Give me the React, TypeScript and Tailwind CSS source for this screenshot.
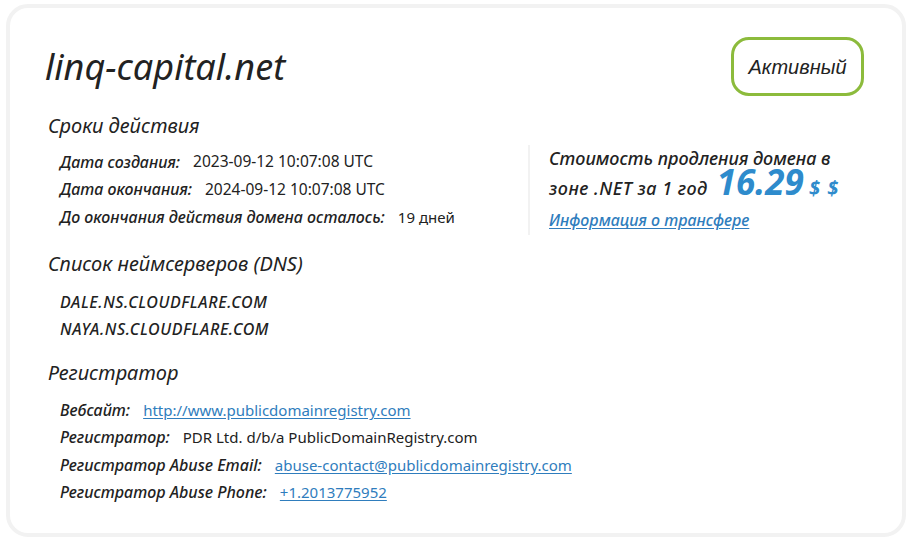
import React from "react";

const font = { fontFamily: '"Noto Sans", "Open Sans", sans-serif' };

function Row({ label, children }: { label: string; children: React.ReactNode }) {
  return (
    <div className="flex items-center h-[27.5px] text-[15px] text-[#222]">
      <span className="italic font-medium text-[16px] mr-[13px]">{label}</span>
      <span>{children}</span>
    </div>
  );
}

function Link({ children }: { children: React.ReactNode }) {
  return <a className="text-[#2f7dbd] underline underline-offset-2" href="#">{children}</a>;
}

export default function App() {
  return (
    <div className="bg-white w-[913px] h-[545px] pt-[4px] pl-[6px]" style={font}>
      <div className="w-[900px] h-[533px] border-4 border-[#f2f2f2] rounded-[22px] pt-[29px] pl-[35px] pr-[38px] text-[#222]">
        <div className="flex items-center justify-between h-[59px]">
          <div className="text-[36px] italic leading-[40px] text-[#222]">linq-capital.net</div>
          <div
            className="h-[59px] w-[133px] flex items-center justify-center border-[3px] border-[#8cbb3c] rounded-[18px] italic text-[20px] text-[#222]"
            style={{ fontFamily: '"Liberation Sans", Arial, sans-serif' }}
          >
            Активный
          </div>
        </div>
        <div className="pl-[3px]">
          <div className="mt-[16px] text-[20px] italic leading-[28px]">Сроки действия</div>
          <div className="flex mt-[8px] h-[83px]">
            <div className="w-[480px] pl-[12px]">
              <Row label="Дата создания:"><span className="text-[15.5px]">2023-09-12 10:07:08 UTC</span></Row>
              <Row label="Дата окончания:"><span className="text-[15.5px]">2024-09-12 10:07:08 UTC</span></Row>
              <Row label="До окончания действия домена осталось:">19 дней</Row>
            </div>
            <div className="w-[2px] bg-[#f2f2f2] -mt-[3px] h-[90px]" />
            <div className="pl-[19px] italic font-medium text-[18px] text-[#222]">
              <div className="leading-[30px] h-[30px] -mt-[5px]">Стоимость продления домена в</div>
              <div className="h-[30px] leading-[30px] whitespace-nowrap">
                <span className="tracking-[0.5px]">зоне .NET за 1 год</span>
                <span className="ml-[9px] text-[35px] font-bold text-[#2e8bcc] leading-[0px]">16.29</span>
                <span className="ml-[5px] text-[20px] font-bold text-[#2e8bcc] tracking-[1px] leading-[0px]">$ $</span>
              </div>
              <div className="leading-[26px] mt-[4px] text-[16px]">
                <a className="text-[#2f7dbd] underline underline-offset-2" href="#">Информация о трансфере</a>
              </div>
            </div>
          </div>
          <div className="mt-[19px] text-[20px] italic leading-[28px]">Список неймсерверов (DNS)</div>
          <div className="mt-[10px] pl-[12px] italic font-medium text-[16px] tracking-[0.6px]">
            <div className="h-[27px] flex items-center">DALE.NS.CLOUDFLARE.COM</div>
            <div className="h-[27px] flex items-center">NAYA.NS.CLOUDFLARE.COM</div>
          </div>
          <div className="mt-[17px] text-[20px] italic leading-[28px]">Регистратор</div>
          <div className="mt-[9px] pl-[12px]">
            <Row label="Вебсайт:"><Link>http://www.publicdomainregistry.com</Link></Row>
            <Row label="Регистратор:">PDR Ltd. d/b/a PublicDomainRegistry.com</Row>
            <Row label="Регистратор Abuse Email:"><Link>abuse-contact@publicdomainregistry.com</Link></Row>
            <Row label="Регистратор Abuse Phone:"><Link>+1.2013775952</Link></Row>
          </div>
        </div>
      </div>
    </div>
  );
}
